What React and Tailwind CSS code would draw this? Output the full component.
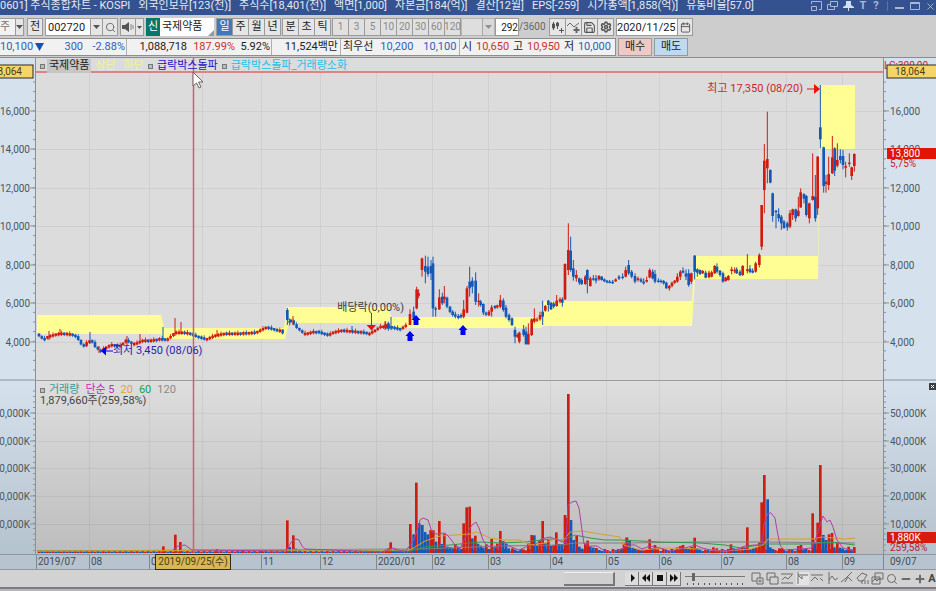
import React, { useState } from 'react';
import { Calendar, Minus, Plus, Save, Search, Settings, X } from 'lucide-react';

const RED = '#cf1d12';
const BLUE = '#1558b8';

// Chart space: 847 x 496, origin at (36, 58)
const X0 = 36;
const Y0 = 58;
const W = 847;
const H = 496;
const px = (x) => `${((x - X0) / W) * 100}%`;
const py = (y) => `${((y - Y0) / H) * 100}%`;

const titleParts = ['0601] 주식종합차트 - KOSPI', '외국인보유[123(천)]', '주식수[18,401(천)]', '액면[1,000]', '자본금[184(억)]', '결산[12월]', 'EPS[-259]', '시가총액[1,858(억)]', '유통비율[57.0]'];
const months = ['2019/07', '08', '09', '10', '11', '12', '2020/01', '02', '03', '04', '05', '06', '07', '08', '09'];
const gridX = [89, 149, 202, 261, 320, 376, 432, 488, 550, 606, 659, 721, 786, 842];
const priceTicks = [[111, '16,000'], [149, '14,000'], [188, '12,000'], [226, '10,000'], [265, '8,000'], [303, '6,000'], [342, '4,000']];
const volumeTicks = [[413, '50,000K'], [441, '40,000K'], [468, '30,000K'], [496, '20,000K'], [524, '10,000K']];

// Quiet stretches follow a path of closes
const quiet = [
    [[38, 334], [40, 336], [45, 340], [48, 337], [57, 334], [63, 333], [72, 334], [78, 337], [83, 345], [86, 347], [90, 340], [95, 343], [98, 350], [103, 350], [110, 346], [115, 344], [120, 347], [125, 343], [128, 340], [133, 344], [138, 343], [145, 340], [153, 340], [160, 339], [163, 338], [167, 341], [172, 337], [177, 332], [183, 332], [190, 333], [197, 336], [208, 339], [217, 335], [227, 333], [240, 333], [258, 332], [268, 327], [278, 330], [284, 330]],
    [[290, 320], [293, 321], [298, 328], [305, 334], [317, 331], [330, 335], [335, 332], [343, 330], [365, 332], [370, 334], [377, 330], [383, 326], [388, 326], [393, 327], [402, 329], [408, 325]],
];

// [x, high, low, colour]
const spikes = [
    [49, 331, 340, RED], [60, 329, 335, RED], [90, 332, 344, BLUE], [99, 346, 353, RED], [127, 336, 345, RED], [140, 334, 343, RED], [163, 327, 340, BLUE], [175, 318, 336, RED], [181, 322, 334, RED],
    [217, 330, 336, RED], [293, 316, 325, RED], [352, 326, 332, BLUE], [385, 321, 330, RED], [391, 317, 330, BLUE],
];

// [x, top, bottom, up, high, low] in thirds of a unit from the block origin
const candleBlocks = [
    { x: 240, y: 290, rows: [[142, 60, 90, 0, 54, 105], [149, 92, 98, 0, 85, 106], [437, 103, 113, 1, 95, 118], [445, 100, 116, 0, 95, 122]] },
    {
        x: 400, y: 210, rows: [
            [30, 312, 345, 1, 298, 345], [41, 305, 325, 0, 290, 330], [50, 238, 295, 1, 230, 298], [56, 250, 257, 1, 238, 265], [66, 145, 180, 1, 143, 200], [76, 168, 185, 0, 137, 220], [84, 170, 192, 0, 140, 200], [93, 168, 190, 0, 150, 210], [99, 160, 295, 0, 140, 320], [107, 295, 298, 0, 290, 320],
            [118, 262, 298, 1, 238, 300], [127, 260, 280, 0, 248, 285], [133, 260, 268, 1, 228, 280], [141, 263, 290, 0, 260, 295], [150, 290, 306, 0, 288, 310], [158, 305, 315, 0, 300, 320], [166, 313, 320, 0, 305, 325], [175, 318, 324, 0, 312, 328], [183, 315, 322, 0, 310, 325], [191, 298, 320, 1, 270, 325],
            [201, 235, 308, 1, 228, 310], [209, 215, 235, 0, 170, 260], [217, 212, 230, 0, 202, 250], [227, 212, 275, 0, 187, 285], [236, 272, 276, 1, 250, 290], [242, 275, 285, 0, 270, 290], [250, 282, 308, 0, 280, 315], [258, 308, 314, 0, 305, 318], [267, 305, 316, 1, 300, 318], [275, 292, 305, 1, 285, 320],
            [285, 288, 294, 0, 285, 298], [292, 286, 292, 1, 284, 296], [301, 270, 290, 1, 255, 295], [310, 272, 300, 0, 265, 305], [318, 293, 320, 0, 285, 325], [327, 315, 330, 0, 310, 335], [336, 325, 345, 0, 322, 348], [345, 360, 380, 0, 350, 400], [352, 375, 380, 1, 370, 384], [358, 368, 395, 1, 365, 400],
            [371, 358, 375, 0, 345, 380], [378, 365, 403, 0, 350, 403], [385, 372, 403, 1, 340, 403], [395, 328, 375, 1, 325, 378], [403, 325, 335, 1, 295, 340], [411, 328, 331, 1, 322, 336], [420, 315, 328, 1, 305, 332], [428, 305, 320, 0, 272, 345], [436, 288, 302, 1, 285, 305], [445, 272, 285, 0, 270, 305],
            [453, 278, 298, 0, 275, 300], [461, 280, 290, 0, 275, 295], [470, 272, 288, 1, 255, 290], [480, 268, 275, 1, 262, 280], [487, 268, 278, 0, 262, 290], [495, 162, 268, 1, 160, 270], [505, 120, 180, 1, 40, 195], [512, 122, 180, 0, 80, 185], [520, 175, 200, 0, 150, 212], [529, 195, 205, 1, 180, 215],
            [538, 205, 218, 0, 203, 225], [545, 210, 222, 0, 205, 225], [556, 200, 222, 1, 195, 225], [562, 180, 210, 0, 178, 250], [571, 205, 228, 1, 200, 230], [580, 205, 208, 0, 195, 212], [588, 205, 212, 0, 195, 220], [597, 198, 208, 1, 195, 212], [605, 200, 210, 0, 198, 212], [613, 208, 214, 0, 205, 216],
            [621, 212, 217, 0, 210, 220], [629, 215, 218, 0, 210, 220], [638, 215, 220, 0, 210, 222], [647, 208, 214, 1, 205, 216], [657, 200, 206, 0, 195, 210], [668, 200, 204, 0, 190, 208], [677, 180, 200, 1, 170, 202], [686, 165, 190, 0, 150, 195], [695, 185, 200, 0, 180, 205], [705, 198, 215, 0, 190, 220], [714, 205, 210, 1, 200, 215],
        ],
    },
    {
        x: 640, y: 210, rows: [
            [3, 208, 215, 0, 203, 218], [11, 215, 220, 0, 205, 224], [20, 210, 215, 1, 200, 218], [29, 180, 202, 1, 175, 205], [38, 185, 205, 0, 178, 208], [45, 192, 215, 0, 180, 220], [55, 212, 216, 0, 205, 218], [63, 212, 216, 0, 208, 220], [71, 213, 220, 0, 210, 224], [79, 218, 235, 0, 215, 236],
            [88, 228, 235, 1, 225, 242], [96, 218, 228, 1, 215, 232], [104, 212, 218, 1, 210, 222], [112, 200, 215, 1, 190, 218], [121, 185, 200, 1, 180, 210], [129, 182, 188, 0, 172, 190], [138, 190, 200, 0, 178, 210], [146, 190, 225, 0, 178, 230], [154, 190, 215, 1, 188, 222], [164, 137, 185, 0, 135, 208],
            [172, 178, 188, 0, 175, 200], [180, 180, 192, 0, 178, 195], [188, 183, 190, 1, 180, 192], [197, 188, 203, 0, 182, 205], [207, 188, 202, 1, 182, 205], [215, 187, 200, 1, 182, 202], [224, 168, 190, 1, 165, 192], [231, 170, 185, 0, 160, 190], [240, 182, 195, 0, 180, 200], [249, 190, 215, 0, 185, 218],
            [257, 203, 213, 1, 200, 215], [265, 198, 210, 1, 195, 212], [275, 178, 183, 1, 170, 193], [284, 180, 184, 1, 172, 190], [290, 178, 190, 0, 172, 192], [300, 185, 196, 0, 180, 198], [308, 168, 195, 1, 165, 198], [322, 178, 183, 1, 132, 190], [330, 176, 186, 0, 165, 190], [338, 182, 188, 0, 175, 190], [347, 160, 185, 1, 155, 188], [358, 135, 165, 1, 130, 172],
        ],
    },
    {
        x: 680, y: 70, rows: [
            [245, 405, 530, 1, 405, 540], [253, 272, 360, 1, 222, 430], [262, 267, 295, 1, 125, 340], [271, 300, 338, 0, 298, 340], [278, 370, 438, 0, 368, 455], [288, 422, 427, 0, 420, 475], [296, 432, 445, 0, 415, 455], [304, 440, 460, 0, 435, 480], [312, 455, 475, 0, 450, 472], [322, 460, 472, 0, 455, 482],
            [330, 430, 470, 1, 420, 475], [338, 418, 435, 1, 416, 450], [347, 418, 445, 0, 416, 455], [355, 422, 438, 1, 380, 440], [362, 367, 412, 1, 355, 414], [372, 372, 386, 0, 370, 400], [379, 378, 435, 0, 375, 440], [388, 400, 445, 1, 398, 460], [398, 378, 390, 1, 250, 392], [406, 380, 445, 0, 315, 455],
            [413, 260, 415, 1, 258, 435], [421, 172, 208, 0, 45, 235], [431, 232, 348, 0, 230, 368], [438, 335, 342, 1, 315, 368], [446, 312, 345, 1, 260, 360], [457, 262, 310, 1, 198, 312], [464, 235, 302, 0, 232, 318], [472, 270, 287, 1, 220, 292], [481, 258, 270, 0, 238, 280], [489, 258, 285, 0, 240, 298],
            [497, 288, 293, 1, 275, 322], [508, 278, 282, 1, 250, 290], [515, 292, 318, 1, 290, 330], [523, 252, 288, 1, 250, 305],
        ],
    },
];

// [x, height, up] in thirds
const volumeBlocks = [
    { x: 0, rows: [[490, 20, 1], [526, 55, 1], [541, 33, 1], [651, 12, 1], [727, 6, 1], [786, 8, 1], [862, 98, 1], [869, 18, 0], [880, 53, 1], [887, 13, 0], [900, 8, 0]] },
    {
        x: 310, rows: [
            [228, 12, 1], [235, 14, 1], [242, 32, 1], [252, 8, 0], [262, 6, 0], [278, 7, 0], [301, 87, 1], [311, 56, 0], [319, 211, 1], [328, 89, 0], [337, 84, 0], [345, 63, 0], [353, 56, 0], [362, 69, 1], [370, 68, 1], [378, 34, 0], [388, 96, 1], [395, 27, 0], [403, 57, 1], [412, 19, 0], [420, 17, 0], [428, 14, 0], [436, 27, 1], [445, 19, 0], [453, 11, 0],
            [461, 89, 1], [470, 137, 1], [479, 139, 1], [487, 44, 0], [496, 52, 1], [504, 28, 0], [512, 22, 0], [520, 16, 0], [529, 26, 1], [537, 12, 0], [545, 42, 1], [554, 19, 0], [562, 28, 1], [571, 66, 1], [579, 36, 0], [588, 28, 0], [596, 14, 0], [608, 14, 1], [616, 10, 0], [625, 6, 0], [640, 11, 1], [648, 8, 1], [655, 29, 1], [665, 54, 1], [673, 53, 0],
            [681, 22, 0], [689, 37, 1], [698, 96, 1], [706, 29, 0], [715, 39, 1], [723, 22, 0], [731, 24, 1], [739, 62, 1], [748, 27, 0], [756, 27, 0], [765, 114, 1], [771, 105, 1], [775, 477, 1], [783, 99, 0], [791, 39, 0], [800, 51, 1], [808, 19, 0], [817, 13, 0], [826, 29, 1], [833, 37, 1], [841, 19, 0], [850, 16, 0], [859, 15, 1], [868, 9, 0],
            [925, 12, 1], [935, 9, 0], [943, 19, 1], [951, 46, 1], [959, 38, 0],
        ],
    },
    {
        x: 620, rows: [
            [12, 28, 1], [20, 46, 1], [29, 39, 0], [38, 16, 0], [46, 14, 0], [56, 9, 1], [64, 8, 0], [72, 8, 1], [80, 12, 1], [89, 41, 1], [97, 15, 0], [105, 24, 1], [113, 11, 1], [172, 17, 1], [181, 21, 1], [189, 24, 1], [197, 14, 0], [206, 14, 0], [215, 18, 1], [224, 46, 1], [232, 14, 0], [240, 11, 0], [280, 17, 1], [290, 14, 1], [325, 12, 1], [333, 26, 1], [341, 14, 0], [349, 12, 0],
            [366, 17, 1], [374, 15, 0], [382, 77, 1], [391, 11, 0], [400, 14, 0], [409, 17, 1], [418, 31, 1], [425, 152, 1], [433, 234, 1], [443, 161, 0], [451, 17, 0], [459, 11, 0], [478, 14, 1], [486, 14, 1], [535, 21, 1], [543, 24, 1], [551, 11, 0], [578, 119, 1], [585, 29, 0], [593, 91, 1], [601, 264, 1], [610, 54, 0], [618, 39, 0], [627, 56, 1], [636, 60, 1], [643, 17, 0],
            [652, 31, 1], [660, 16, 0], [668, 14, 0], [677, 9, 0], [686, 19, 1], [694, 11, 0], [703, 18, 1],
        ],
    },
];

const averages = [
    { color: '#7d7f7d', points: '37,551 420,549 500,546 560,545 575,543 625,543 700,542 770,542 855,543' },
    { color: '#2e9a4e', points: '37,551 410,551 425,547 450,545 480,542 500,543 525,542 550,539 563,540 575,535 590,538 605,540 620,540 640,541 660,542 700,543 725,545 740,548 765,544 810,544 830,542 855,545' },
    { color: '#d6a02c', points: '37,551 340,550 410,550 425,541 440,536 455,535 470,534 477,532 490,538 505,540 520,540 530,545 545,543 555,539 564,540 570,532 582,531 600,534 620,537 624,545 640,550 665,548 700,549 725,551 750,549 763,545 768,539 790,539 812,539 822,537 845,539 855,538' },
    { color: '#b13fa6', points: '173,550 178,546 185,545 192,550 286,551 292,541 296,539 299,540 302,546 305,549 383,552 393,548 405,552 413,541 418,528 420,520 423,518 428,520 432,532 436,534 445,533 450,538 455,545 460,549 464,540 469,530 472,525 476,522 479,528 483,540 487,546 497,548 503,541 509,546 519,550 528,546 535,545 541,539 550,537 560,541 566,543 568,505 572,502 576,501 579,508 582,530 584,544 590,546 597,546 605,551 615,552 623,548 628,545 635,545 642,549 650,546 660,548 670,551 685,548 695,545 702,548 715,551 735,550 745,546 755,545 762,545 764,525 768,513 771,513 775,518 777,530 780,545 784,550 800,549 812,548 816,538 820,525 823,516 827,522 830,520 833,527 837,540 843,548 853,551' },
];

const valueAt = (path, x) => {
    const i = path.findIndex(([nx]) => nx >= x);
    if (i <= 0) return path[0][1];
    const [ax, ay] = path[i - 1];
    const [bx, by] = path[i];
    return ay + ((by - ay) * (x - ax)) / (bx - ax);
};

const QuietCandles = ({ path }) => {
    const out = [];
    for (let x = path[0][0] + 1, i = 0; x < path[path.length - 1][0]; x += 2.8, i++) {
        const a = valueAt(path, x - 1);
        const b = valueAt(path, x + 2);
        const up = Math.abs(b - a) < 0.5 ? (i * 7) % 5 < 3 : b < a;
        const top = Math.min(a, b) - 0.5;
        const h = Math.max(2.5, Math.abs(b - a));
        out.push(
            <g key={i} fill={up ? RED : BLUE}>
                <rect x={x - 1.3} y={top} width="2.6" height={h} />
                <rect x={x - 0.4} y={top - (i % 3)} width="0.8" height={h + (i % 3) + 1} />
            </g>
        );
    }
    return out;
};

const Plot = () => {
    const fill = [];
    for (let x = 39, i = 0; x < 856; x += 2.8, i++) {
        const h = x < 385 ? 1 + (i % 2) : 2 + ((i * 5) % 3);
        fill.push(<rect key={i} x={x - 1.3} y={553 - h} width="2.6" height={h} fill={(i * 7) % 5 < 2 ? RED : BLUE} />);
    }

    return (
        <svg className="min-h-80 min-w-0 flex-1" role="img" aria-label="국제약품 일봉 차트">
            <defs>
                <linearGradient id="volumeBg" x1="0" y1="0" x2="0" y2="1">
                    <stop offset="0" stopColor="#dedede" />
                    <stop offset="1" stopColor="#bdbdbd" />
                </linearGradient>
            </defs>
            <svg width="100%" height="100%" viewBox={`${X0} ${Y0} ${W} ${H}`} preserveAspectRatio="none">
                <rect x="36" y="58" width="847" height="322" fill="#dcdcdc" />
                <rect x="36" y="380" width="847" height="174" fill="url(#volumeBg)" />
                <g stroke="#000000" strokeOpacity="0.05" strokeWidth="1">
                    {gridX.map((x) => <path key={x} d={`M${x + 0.5} 72V553`} />)}
                    {[...priceTicks, ...volumeTicks].map(([y]) => <path key={y} d={`M36 ${y + 0.5}H883`} />)}
                </g>
                <path d="M36 380.5H883" stroke="#9c9c9a" strokeWidth="1" />

                {/* 급락박스 */}
                <path
                    fill="#fefe94"
                    d="M37 315H161L164 328H284L287 307H389L391 317H541L543 301H692L695 256H818L820 85H855V149H820L818 279H695L692 326H543L541 328H391L389 323H289L285 339H165L161 334H37Z"
                />

                {quiet.map((path, i) => <QuietCandles key={i} path={path} />)}
                {spikes.map(([x, hi, lo, c]) => <rect key={x} x={x - 0.5} y={hi} width="1" height={lo - hi} fill={c} />)}
                {candleBlocks.map((b) => (
                    <g key={b.x} transform={`translate(${b.x} ${b.y}) scale(${1 / 3})`}>
                        {b.rows.map(([x, top, bottom, up, hi, lo]) => (
                            <g key={x} fill={up ? RED : BLUE}>
                                <rect x={x - 4} y={top} width="8" height={Math.max(4, bottom - top)} />
                                <rect x={x - 1.5} y={hi} width="3" height={lo - hi} />
                            </g>
                        ))}
                    </g>
                ))}

                {fill}
                {volumeBlocks.map((b) => (
                    <g key={b.x} transform={`translate(${b.x} 553) scale(${1 / 3})`}>
                        {b.rows.map(([x, h, up]) => <rect key={x} x={x - 4} y={-h} width="8" height={h} fill={up ? RED : BLUE} />)}
                    </g>
                ))}
                {averages.map((a) => <polyline key={a.color} points={a.points} fill="none" stroke={a.color} strokeWidth="1" />)}

                {/* Signals */}
                <g fill="#0000f0">
                    {[[410, 331], [416, 315], [463, 325]].map(([x, y]) => (
                        <path key={x} d={`M${x} ${y}l4.500 5h-2v5h-5v-5h-2z`} />
                    ))}
                    <path d="M101 351l5-4.500v4h7v1h-7v4z" />
                </g>
                <path d="M371 313h1v12h4l-4.500 5.500l-5-5.500h4.500z" fill="#e8140c" />
                <path d="M807 88.500h7v-4.500l6 5l-6 5v-4.500h-7z" fill="#e8140c" />

                {/* Crosshair */}
                <path d="M193.500 58V553" stroke="#cf6069" strokeWidth="1.500" />
                <path d="M36 72H883" stroke="#de6663" strokeWidth="1.500" />
            </svg>
            <g fontSize="11">
                <text x={px(113)} y={py(354)} fill="#2a22b4">최저 3,450 (08/06)</text>
                <text x={px(404)} y={py(311)} fill="#3c3c3c" textAnchor="end">배당락(0,00%)</text>
                <text x={px(803)} y={py(92)} fill="#cc1f2a" textAnchor="end">최고 17,350 (08/20)</text>
            </g>
        </svg>
    );
};

const Axis = ({ side }) => {
    const left = side === 'left';
    const minor = [];
    for (let y = 82; y < 376; y += 9.6) minor.push(y);
    for (let y = 391; y < 551; y += 5.5) minor.push(y);
    const tick = (w) => (left ? [36 - w, 36] : [0, w]);

    return (
        <svg className={left ? 'w-9 shrink-0' : 'w-[53px] shrink-0'} fontSize="10" fill="#4d565e">
            <defs>
                <linearGradient id={`axis-${side}`} x1="0" y1="0" x2="0" y2="1">
                    <stop offset="0.650" stopColor="#d5e1ec" />
                    <stop offset="1" stopColor="#b5c3cf" />
                </linearGradient>
            </defs>
            <rect width="100%" height="100%" fill={`url(#axis-${side})`} />
            <g stroke="#8a9298">
                {minor.map((y) => <line key={y} x1={tick(3)[0]} x2={tick(3)[1]} y1={py(y)} y2={py(y)} />)}
                {[...priceTicks, ...volumeTicks].map(([y]) => <line key={y} x1={tick(6)[0]} x2={tick(6)[1]} y1={py(y)} y2={py(y)} />)}
                <line x1={left ? 36 : 0} x2={left ? 36 : 0} y1="0" y2="100%" strokeWidth="2" />
                <line x1="0" x2="100%" y1={py(380)} y2={py(380)} />
            </g>
            {[...priceTicks, ...volumeTicks].map(([y, label]) => (
                <text key={y} x={left ? 30 : 7} y={py(y)} dy="4" textAnchor={left ? 'end' : 'start'}>{label}</text>
            ))}
            {left ? (
                <svg y={py(65)} height="15" overflow="visible">
                    <rect x="-10" y="0" width="43" height="13" fill="#f6d568" stroke="#2f2a1c" />
                    <text x="22" y="10" textAnchor="end" fill="#4b4018">18,064</text>
                </svg>
            ) : (
                <>
                    <text x="1" y={py(69)} fontSize="10" fill="#d0202a">LC:300,00</text>
                    <svg y={py(65)} height="15" overflow="visible">
                        <rect x="4" y="0" width="60" height="13" fill="#f6d568" stroke="#2f2a1c" />
                        <text x="12" y="10" fill="#4b4018">18,064</text>
                    </svg>
                    <svg y={py(148)} height="24" overflow="visible">
                        <rect x="4" width="50" height="11" fill="#e01408" />
                        <text x="7" y="9" fill="#ffffff">13,800</text>
                        <text x="7" y="19" fill="#c8202c">5,75%</text>
                    </svg>
                    <svg y={py(383)} height="8" overflow="visible">
                        <rect x="46" width="7" height="7" fill="#3b3f44" />
                        <path d="M48 2l3 3m0-3l-3 3" stroke="#ffffff" />
                    </svg>
                    <svg y={py(532)} height="24" overflow="visible">
                        <rect x="4" width="50" height="11" fill="#d81a10" />
                        <text x="7" y="9" fill="#ffffff">1,880K</text>
                        <text x="7" y="19" fill="#b8202c">259,58%</text>
                    </svg>
                </>
            )}
        </svg>
    );
};

const Caret = () => (
    <svg viewBox="0 0 7 4" className="h-1 w-[7px]"><path d="M0 0h7L3.500 4z" fill="#555" /></svg>
);

const frame = 'flex h-[18px] shrink-0 items-center justify-center border border-[#9b9b9b]';
const boxed = 'flex h-[18px] shrink-0 items-center justify-center border border-[#9b9b9b] bg-[#e6e6e6]';

const Tool = ({ label, active, muted, onClick, children }) => (
    <button
        type="button"
        aria-label={label}
        onClick={onClick}
        className={`${frame} -mr-px w-[17px] ${active ? 'bg-[#4077bd] text-white' : muted ? 'bg-[#e0e0e0] text-[#8a8a8a]' : 'bg-[#e6e6e6] text-[#222]'}`}
    >
        {children}
    </button>
);

const Toolbar = () => {
    const [period, setPeriod] = useState('일');
    const [code, setCode] = useState('002720');
    const [count, setCount] = useState('292');
    const [date, setDate] = useState('2020/11/25');

    return (
        <div className="flex h-[22px] items-center gap-0.5 overflow-hidden pt-0.5">
            <div className="flex pr-px">
                <select aria-label="종목 구분" className="h-[18px] w-[15px] appearance-none border-y border-[#9b9b9b] bg-[#f2f2f2] text-[#777]">
                    <option>주</option>
                </select>
                <button type="button" aria-label="구분 목록" className={`${boxed} w-[9px]`}><Caret /></button>
            </div>
            <button type="button" className={`${boxed} w-4`}>전</button>
            <div className="flex">
                <input aria-label="종목코드" value={code} onChange={(e) => setCode(e.target.value)} className="h-[18px] w-[46px] border border-[#9b9b9b] bg-white px-0.5 outline-none" />
                <button type="button" aria-label="종목 목록" className={`${boxed} -ml-px w-[13px]`}><Caret /></button>
                <button type="button" aria-label="종목 검색" className={`${boxed} -ml-px w-4`}><Search size={11} color="#666" /></button>
            </div>
            <div className="flex">
                <button type="button" aria-label="소리" className={`${boxed} w-4`}>
                    <svg viewBox="0 0 12 12" className="size-3"><path d="M0 4h3l4-3v10L3 8H0z" fill="#555" /><path d="M9 3v6M11 4v4" stroke="#888" /></svg>
                </button>
                <button type="button" aria-label="소리 목록" className={`${boxed} -ml-px w-[9px]`}><svg viewBox="0 0 5 3" className="w-[5px]"><path d="M0 0h5L2.500 3z" fill="#555" /></svg></button>
            </div>
            <div className="flex">
                <span className="flex h-[18px] w-[14px] items-center justify-center bg-[#08776a] text-white">신</span>
                <span className="flex h-[18px] w-[54px] items-center justify-between bg-white pl-0.5">
                    국제약품
                    <svg viewBox="0 0 6 6" className="size-1.5 self-end"><path d="M6 0v6H0z" fill="#999" /></svg>
                </span>
            </div>
            <div className="flex">
                {['일', '주', '월', '년'].map((p) => <Tool key={p} active={p === period} onClick={() => setPeriod(p)}>{p}</Tool>)}
            </div>
            <div className="flex">
                {['분', '초', '틱'].map((p) => <Tool key={p} active={p === period} onClick={() => setPeriod(p)}>{p}</Tool>)}
            </div>
            <div className="flex text-[10px]">
                {['1', '3', '5', '10', '20', '30', '60', '120'].map((n) => <Tool key={n} muted>{n}</Tool>)}
                <select aria-label="분 단위" className="ml-px h-[18px] w-[22px] appearance-none border border-[#b5b5b5] bg-[#dedede]"><option></option></select>
                <button type="button" aria-label="단위 목록" className={`${boxed} -ml-px w-[13px] opacity-50`}><Caret /></button>
                <input aria-label="봉 개수" value={count} onChange={(e) => setCount(e.target.value)} className="h-[18px] w-6 border border-[#9b9b9b] bg-white text-right outline-none" />
                <span className="flex w-7 items-center text-[#666]">/3600</span>
            </div>
            <div className="flex pr-px">
                <Tool label="봉 간격">
                    <svg viewBox="0 0 13 13" className="size-[13px]" stroke="#555" fill="#555"><path d="M2.500 1v8M6.500 1v7M10.500 7v5M8 9.500h5" /><path d="M1.500 3h2v4h-2zM5.500 2h2v3h-2z" /></svg>
                </Tool>
                <Tool label="선 추가">
                    <svg viewBox="0 0 13 13" className="size-[13px]" stroke="#666" fill="none"><path d="M0 5l3-3l4 4l5-4" /><path d="M9.500 6v6M6.500 9h6" strokeWidth="2" /></svg>
                </Tool>
                <Tool label="저장"><Save size={13} color="#555" /></Tool>
                <Tool label="설정"><Settings size={12} color="#555" strokeWidth={3} /></Tool>
            </div>
            <div className="flex">
                <input aria-label="조회일" value={date} onChange={(e) => setDate(e.target.value)} className="h-[18px] w-[62px] border border-[#9b9b9b] bg-white outline-none" />
                <button type="button" aria-label="달력" className={`${boxed} -ml-px w-4`}><Calendar size={11} color="#555" /></button>
            </div>
        </div>
    );
};

const QuoteRow = () => (
    <div className="flex h-5 items-center gap-0.5 overflow-hidden whitespace-nowrap">
        <div className="flex h-[18px] w-[616px] shrink-0 items-center divide-x divide-[#b0b0b0] border border-l-0 border-[#8e8e8e] bg-[#f1f1f1] text-right *:flex *:h-full *:items-center">
            <div className="w-[127px] text-[#2f5fb5]">
                <span className="flex w-[45px] items-center gap-0.5">10,100 <svg viewBox="0 0 9 8" className="h-2 w-[9px]"><path d="M0 0h9L4.500 8z" fill="#1552b8" /></svg></span>
                <span className="w-[38px]">300</span>
                <span className="w-[42px]">-2.88%</span>
            </div>
            <div className="w-[145px]">
                <span className="w-[60px]">1,088,718</span>
                <span className="w-12 text-[#c8352a]">187.99%</span>
                <span className="w-[35px]">5.92%</span>
            </div>
            <div className="w-[69px] justify-end pr-0.5">11,524백만</div>
            <div className="w-[119px] text-[#2f5fb5]">
                <span className="pl-0.5 text-[#222]">최우선</span>
                <span className="w-10">10,200</span>
                <span className="w-[43px]">10,100</span>
            </div>
            <div className="flex-1 justify-between pr-1 pl-0.5">
                <span>시</span><span className="text-[#c8352a]">10,650</span>
                <span>고</span><span className="text-[#c8352a]">10,950</span>
                <span>저</span><span className="text-[#2f5fb5]">10,000</span>
            </div>
        </div>
        <button type="button" className="h-[18px] w-[34px] shrink-0 border border-[#a09a98] bg-[#f0c9c4]">매수</button>
        <button type="button" className="h-[18px] w-[34px] shrink-0 border border-[#8f9ba6] bg-[#bfd9ee]">매도</button>
    </div>
);

const Square = () => <span className="mt-px size-[5px] shrink-0 border border-[#777] bg-[#bbb]" />;

const TitleBar = () => (
    <header className="flex h-[15px] items-start justify-between bg-[#34528f] text-[#e4e9f4]">
        <h1 className="flex gap-2 leading-[12px] whitespace-nowrap">
            {titleParts.map((part) => <span key={part}>{part}</span>)}
        </h1>
        <div className="flex h-3 shrink-0 items-center gap-[5px] text-[#a9b8d8]">
            <button type="button" aria-label="축소"><svg viewBox="0 0 11 10" className="h-2.5 w-[11px]" fill="none" stroke="currentColor"><path d="M.5 3V.5h10v8H8M.5 5.500h5v4h-5z" /></svg></button>
            <button type="button" aria-label="복제"><svg viewBox="0 0 11 10" className="h-2.5 w-[11px]" fill="none" stroke="currentColor"><path d="M3.500.5h7v5h-7zM3 3.500H.5v5h7V6" /></svg></button>
            <button type="button" aria-label="고정"><svg viewBox="0 0 11 10" className="h-2.5 w-[11px]" fill="#d5deef"><path d="M3 0h5v4l3 2v1H6v3H5V7H0V6l3-2z" /></svg></button>
            <button type="button" aria-label="글꼴" className="w-2 leading-[12px] font-bold">T</button>
            <button type="button" aria-label="도움말" className="w-2 leading-[12px] font-bold">?</button>
            <span className="mx-0.5 h-2.5 w-px bg-[#5a74a8]" />
            <button type="button" aria-label="최소화"><svg viewBox="0 0 10 10" className="size-2.5" stroke="currentColor" strokeWidth="2"><path d="M0 7h9" /></svg></button>
            <button type="button" aria-label="최대화"><svg viewBox="0 0 10 10" className="size-2.5" fill="none" stroke="currentColor"><path d="M.5 1.500h9v7h-9zM.5 2.500h9" /></svg></button>
            <button type="button" aria-label="닫기"><X size={11} /></button>
        </div>
    </header>
);

const tools = [
    ['영역 추가', 'M6 9H1V1h8v5M6 6h6v6H6zM7.500 9h3M9 7.500v3'],
    ['영역 복사', 'M4 8H1V1h8v4M4 5h8v7H4z'],
    ['추세선', 'M0 2h12M0 11h12M1 8l3-3l3 2l4-4'],
    ['수직선', 'M2 0v12M2 3h10M3 4l3 3M6 4v3'],
    ['수평선', 'M0 3h12M0 9l4-4l3 3M9 6l3 3'],
    ['파동', 'M3 0v12M3 8l3-4l3 4l3-2'],
    ['각도선', 'M0 10l4-3l7-7M4 10l3-5l4 4'],
    ['지우기', 'M1 6l5-5l5 2l-4 6H3zM6 12V8M9 12V8M12 12V8'],
    ['겹치기', 'M4 1h8v6H4zM1 5h8v7H1zM1 10l3-3l2 2l3-3'],
];

const BottomBar = () => {
    const [zoom, setZoom] = useState(12);

    return (
        <div className="flex h-[17px] items-center justify-end gap-1 overflow-hidden bg-[#d2d2d2]">
            <div className="mr-1.5 h-3.5 w-[51px] shrink-0 border-t border-r-2 border-b-2 border-[#777] border-t-[#eee] bg-[#cfcfcf]" />
            <div className="flex">
                {[['재생', 'M4 1l4 4l-4 4z'], ['뒤로', 'M5 1v8L1 5zM9 1v8L5 5z'], ['정지', 'M2 2h6v6H2z'], ['앞으로', 'M1 1l4 4l-4 4zM5 1l4 4l-4 4z']].map(([name, d]) => (
                    <button key={name} type="button" aria-label={name} className="flex h-3.5 w-[14px] items-center justify-center border-r border-b border-[#777] bg-[#dcdcdc]">
                        <svg viewBox="0 0 10 10" className="size-2.5" fill="#111"><path d={d} /></svg>
                    </button>
                ))}
            </div>
            <div className="flex w-[60px] flex-col gap-0.5">
                <input
                    type="range"
                    aria-label="확대 비율"
                    value={zoom}
                    onChange={(e) => setZoom(e.target.value)}
                    className="h-2 w-full appearance-none bg-[linear-gradient(#777,#777)] bg-[length:100%_1px] bg-center bg-no-repeat [&::-webkit-slider-thumb]:h-2 [&::-webkit-slider-thumb]:w-[3px] [&::-webkit-slider-thumb]:appearance-none [&::-webkit-slider-thumb]:bg-[#666]"
                />
                <div className="flex justify-between px-0.5">
                    {Array.from({ length: 11 }, (_, i) => <span key={i} className="h-0.5 w-px bg-[#555]" />)}
                </div>
            </div>
            <div className="flex items-center gap-0.5 pl-0.5 text-[#6a6a6a]">
                {tools.map(([name, d]) => (
                    <button key={name} type="button" aria-label={name} className={name === '수직선' ? 'bg-[#e4e4e4]' : ''}>
                        <svg viewBox="0 0 13 13" className="size-[13px]" fill="none" stroke="currentColor"><path d={d} /></svg>
                    </button>
                ))}
                <button type="button" aria-label="돋보기"><Search size={12} /></button>
                <button type="button" aria-label="축소"><Minus size={12} strokeWidth={4} /></button>
                <button type="button" aria-label="확대"><Plus size={12} strokeWidth={4} /></button>
                <button type="button" className="w-2 font-bold text-[#444]">A</button>
            </div>
        </div>
    );
};

const App = () => (
    <div className="flex min-h-screen flex-col bg-[#cdcdcd] font-['Roboto','Noto_Sans_CJK_KR',sans-serif] text-[11px] leading-4 text-[#222]">
        <TitleBar />
        <Toolbar />
        <QuoteRow />

        <main className="relative flex flex-1 border-t border-[#8c8c8c]">
            <Axis side="left" />
            <Plot />
            <Axis side="right" />

            {/* Legends over the panels */}
            <div className="absolute top-0 left-10 flex items-center gap-1 whitespace-nowrap">
                <div className="flex items-center gap-0.5">
                    <Square />
                    <span className="bg-[#c6c6c6] px-0.5 leading-[14px]">국제약품</span>
                </div>
                <span className="flex gap-2 text-[#f2f29a]"><span>상단</span><span>하단</span></span>
                <span className="flex items-center gap-1 text-[#1c12c8]"><Square />급락박스돌파</span>
                <span className="flex items-center gap-1 text-[#1fbfe6]"><Square />급락박스돌파_거래량소화</span>
            </div>
            <div className="absolute top-[65%] left-10 pt-1 leading-[11px] whitespace-nowrap">
                <div className="flex items-center gap-1">
                    <Square />
                    <div className="flex gap-1.5">
                        <span className="text-[#3a9a96]">거래량</span>
                        <span className="text-[#bf2fb4]">단순 5</span>
                        <span className="text-[#dfa62c]">20</span>
                        <span className="text-[#22a04a]">60</span>
                        <span className="text-[#8a8a8a]">120</span>
                    </div>
                </div>
                <p className="text-[#444]">1,879,660주(259,58%)</p>
            </div>

            <svg viewBox="0 0 12 18" className="absolute top-[13px] left-48 h-[18px] w-3">
                <path d="M1 1v14l3.500-3l2.500 5l2-1l-2.500-5H11z" fill="#fff" stroke="#666" />
            </svg>
        </main>

        <div className="relative flex h-4 border-y border-[#8f989f] bg-[#b7c4d0] text-[10px] leading-[14px] text-[#444c54]">
            <div className="w-9 shrink-0" />
            <div className="grid min-w-0 flex-1 grid-cols-[53fr_60fr_53fr_59fr_59fr_56fr_56fr_56fr_62fr_56fr_53fr_62fr_65fr_56fr_41fr]">
                {months.map((m, i) => <span key={i} className="min-w-0 border-l border-[#7f8890] pl-px">{m}</span>)}
            </div>
            <div className="w-[53px] shrink-0 border-l border-[#7f8890] pl-1.5">09/07</div>
            <div className="absolute -top-px left-[155px] h-4 w-[76px] border border-[#332c18] bg-[#d8b854] text-center text-[#4b4018]">2019/09/25(수)</div>
        </div>
        <BottomBar />
        <div className="h-1 border-t-2 border-[#7d7d7d] bg-[#b9b4bc]" />
    </div>
);

export default App;
